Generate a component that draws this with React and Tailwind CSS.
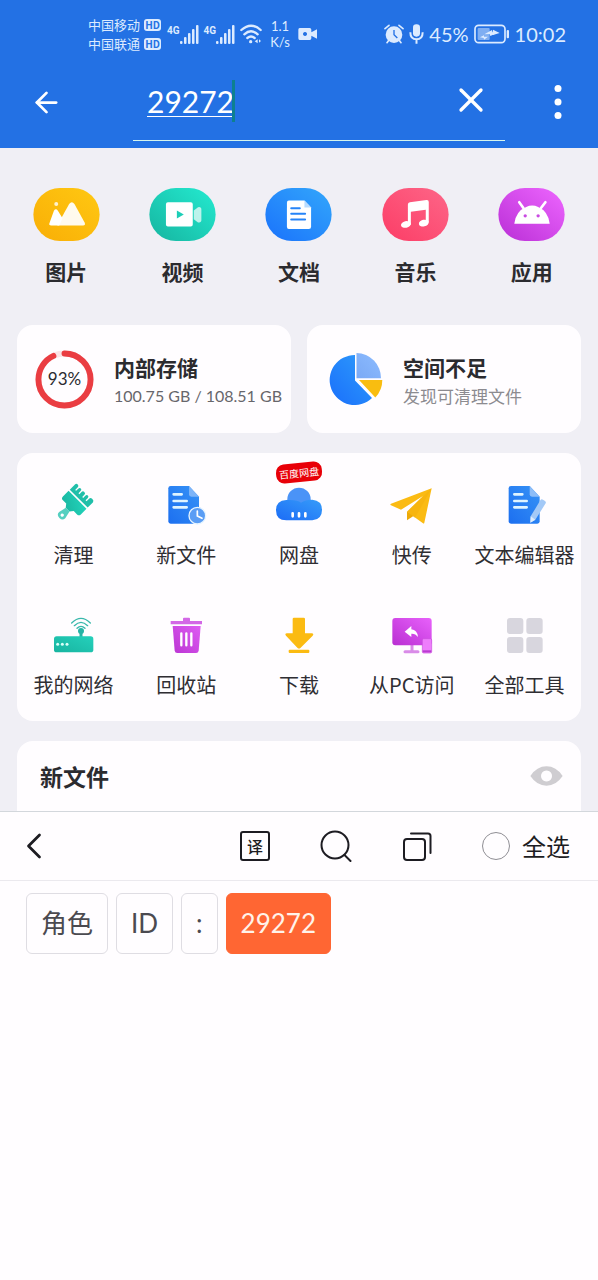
import { useState } from 'react';
import { ArrowLeft, ChevronLeft, X } from 'lucide-react';

/* ---------- shared bits ---------- */

function Gradient({ id, from, to }) {
  return (
    <linearGradient id={id} x1="0" y1="1" x2="1" y2="0">
      <stop offset="0" stopColor={from} />
      <stop offset="1" stopColor={to} />
    </linearGradient>
  );
}

function ToolSvg({ children }) {
  return (
    <svg viewBox="0 0 132 132" className="h-11 w-11 overflow-visible" aria-hidden="true">
      {children}
    </svg>
  );
}

/* ---------- status bar ---------- */

function HdBadge() {
  return (
    <span className="flex h-3 w-[17px] items-center justify-center rounded-[3px] bg-[#dcebff] text-[10px] leading-3 font-bold text-[#2371e4]">
      HD
    </span>
  );
}

function Signal() {
  return (
    <div className="flex">
      <span className="font-['Roboto',sans-serif] text-[10px] leading-3 font-bold">4G</span>
      <svg viewBox="0 0 20 19" className="h-[19px] w-5" fill="currentColor" aria-hidden="true">
        <rect x="0" y="16" width="2.500" height="3" rx="1" />
        <rect x="4" y="12" width="2.500" height="7" rx="1" />
        <rect x="8" y="8" width="2.500" height="11" rx="1" />
        <rect x="12" y="4" width="2.500" height="15" rx="1" />
        <rect x="16" y="0" width="2.500" height="19" rx="1" />
      </svg>
    </div>
  );
}

function StatusBar() {
  return (
    <div className="flex h-[68px] items-center justify-between pr-8 pl-[88px] text-[#dcebff]">
      <div className="flex items-center gap-1">
        <div className="mr-0.5 text-[13px] leading-[19px]">
          <div className="flex items-center gap-1">中国移动 <HdBadge /></div>
          <div className="flex items-center gap-1">中国联通 <HdBadge /></div>
        </div>
        <Signal />
        <Signal />
        <svg viewBox="0 0 66 60" className="h-5 w-[22px]" fill="none" stroke="currentColor" strokeWidth="7" strokeLinecap="round" aria-hidden="true">
          <path d="M4 18Q33-8 62 18M13 31Q33 13 53 31M22 42Q33 33 44 42" />
          <circle cx="32" cy="53" r="5" fill="currentColor" stroke="none" />
          <path d="M44 52l9-6v12zM57 46l6 5-6 5z" fill="currentColor" stroke="none" />
        </svg>
        <div className="ml-1 text-center font-['Lato',sans-serif] text-[13px] leading-4">
          1.1
          <br />
          K/s
        </div>
        <svg viewBox="0 0 60 42" className="ml-1 h-3.5 w-5" fill="currentColor" aria-hidden="true">
          <path fillRule="evenodd" d="M5 3h30q5 0 5 5v8l17-9v28l-17-9v8q0 5-5 5H5q-4 0-4-5V8q0-5 4-5zm16 12a6 6 0 1 0 .1 0z" />
        </svg>
      </div>

      <div className="flex items-center gap-[5px] font-['Lato',sans-serif] text-xl">
        <svg viewBox="0 0 60 60" className="h-5 w-5" aria-hidden="true">
          <g fill="none" stroke="currentColor" strokeWidth="5" strokeLinecap="round">
            <path d="M3 14L15 4M57 14L45 4M15 48l-6 8M45 48l6 8" />
          </g>
          <circle cx="30" cy="32" r="25" fill="currentColor" />
          <path d="M30 18v14l10 10" fill="none" stroke="#2371e4" strokeWidth="4" />
        </svg>
        <svg viewBox="0 0 45 60" className="h-5 w-[15px]" aria-hidden="true">
          <rect x="12" y="1" width="21" height="37" rx="10" fill="currentColor" />
          <path d="M4 25q0 21 18.500 21T41 25M22.500 45v14" fill="none" stroke="currentColor" strokeWidth="6" />
        </svg>
        <span>45%</span>
        <svg viewBox="0 0 108 60" className="h-5 w-9" aria-hidden="true">
          <rect x="3" y="4" width="90" height="52" rx="11" fill="none" stroke="currentColor" strokeWidth="5" />
          <rect x="11" y="12" width="36" height="36" rx="3" fill="currentColor" opacity=".5" />
          <path d="M31 31l23-13 2 7h18l-25 11-2-6zM18 40l12-6v4h12l-12 9-1-5z" fill="currentColor" />
          <path d="M57 17l20 10-20 6z" fill="currentColor" />
          <rect x="98" y="18" width="7" height="25" rx="3" fill="currentColor" />
        </svg>
        <span>10:02</span>
      </div>
    </div>
  );
}

/* ---------- header ---------- */

function Header() {
  const [query, setQuery] = useState('29272');

  return (
    <header className="bg-[#2371e4] text-white">
      <StatusBar />
      <div className="flex h-20 items-start">
        <button type="button" aria-label="返回" className="mt-[18px] ml-[30px]">
          <ArrowLeft size={33} strokeWidth={2} />
        </button>
        <div className="ml-[70px] flex h-[73px] flex-1 items-start border-b border-[#d5f5ee] pl-3.5">
          <input
            type="text"
            aria-label="搜索"
            value={query}
            onChange={(e) => setQuery(e.target.value)}
            className="mt-3 field-sizing-content h-[42px] bg-transparent font-['Lato',sans-serif] text-[30px] leading-[44px] underline decoration-1 underline-offset-3 outline-none"
          />
          <span className="-ml-0.5 mt-3 h-[42px] w-[3px] bg-[#0d8090]" />
          <button type="button" aria-label="清除" onClick={() => setQuery('')} className="mt-3 mr-3.5 ml-auto">
            <X size={40} strokeWidth={2} />
          </button>
        </div>
        <button type="button" aria-label="更多" className="mt-4 mr-8 ml-[45px]">
          <svg viewBox="0 0 16 36" className="h-9 w-4" fill="currentColor" aria-hidden="true">
            <circle cx="8" cy="4.500" r="3.500" />
            <circle cx="8" cy="18" r="3.500" />
            <circle cx="8" cy="31.500" r="3.500" />
          </svg>
        </button>
      </div>
    </header>
  );
}

/* ---------- categories ---------- */

const categories = [
  {
    label: '图片',
    from: '#f9ae06',
    to: '#ffc812',
    art: (
      <>
        <circle cx="69" cy="48" r="6" opacity=".8" />
        <path d="M62 69q6-9 12 0l14 22-10 22H54q-9 0-5-8z" />
        <path opacity=".93" d="M108 48q8-10 16 0l31 57q3 8-5 8H72z" />
      </>
    ),
  },
  {
    label: '视频',
    from: '#16b5a0',
    to: '#24ead0',
    art: (
      <>
        <path fillRule="evenodd" d="M56 43h69q6 0 6 6v61q0 6-6 6H56q-6 0-6-6V49q0-6 6-6zm27 25v24l21-12z" />
        <path opacity=".7" d="M134 68l13-10q10-2 10 8v30q0 10-10 8l-13-10z" />
      </>
    ),
  },
  {
    label: '文档',
    from: '#1a72fb',
    to: '#33a7fb',
    art: (
      <>
        <path d="M71 38h47l20 21v58q0 7-7 7H71q-6 0-6-7V45q0-7 6-7z" />
        <path d="M118 38v21h20z" fill="#b9dcff" />
        <path d="M78 61h26M78 78h42M78 95h42" stroke="#2684f8" strokeWidth="6" strokeLinecap="round" />
      </>
    ),
  },
  {
    label: '音乐',
    from: '#fc3d66',
    to: '#fd6688',
    art: (
      <>
        <path d="M77 50q0-6 6-7l50-7q7-1 7 6v62h-9V66l-45 6v39h-9z" />
        <ellipse cx="71" cy="110" rx="15" ry="10" transform="rotate(-12 71 110)" />
        <ellipse cx="125" cy="106" rx="15" ry="10" transform="rotate(-12 125 106)" />
      </>
    ),
  },
  {
    label: '应用',
    from: '#b92fd6',
    to: '#ee66ff',
    art: (
      <>
        <path d="M48 108q4-38 36-51 18-8 36 0 31 13 35 51z" />
        <path d="M63 43l13 18M142 43l-14 18" stroke="#fff" strokeWidth="8" strokeLinecap="round" />
        <circle cx="81" cy="84" r="5" fill="#c94be2" />
        <circle cx="120" cy="84" r="5" fill="#c94be2" />
      </>
    ),
  },
];

function Categories() {
  return (
    <nav className="grid grid-cols-5 px-2 pt-10 pb-[38px]">
      {categories.map((c, i) => (
        <button key={c.label} type="button" className="flex flex-col items-center gap-3.5">
          <svg viewBox="0 0 200 160" className="h-[53px] w-[67px]" fill="#fff" aria-hidden="true">
            <defs>
              <Gradient id={`cat${i}`} from={c.from} to={c.to} />
            </defs>
            <rect width="200" height="160" rx="80" fill={`url(#cat${i})`} />
            {c.art}
          </svg>
          <span className="text-[21px] leading-8 font-bold text-[#2b2b2f]">{c.label}</span>
        </button>
      ))}
    </nav>
  );
}

/* ---------- storage cards ---------- */

function StorageCards() {
  return (
    <section className="grid grid-cols-2 gap-4">
      <button type="button" className="flex h-[108px] items-center gap-5 rounded-2xl bg-[#fffdff] pl-[18px] text-left">
        <div className="grid h-[59px] w-[59px] shrink-0 place-items-center">
          <svg viewBox="0 0 60 60" className="col-start-1 row-start-1 h-full w-full -rotate-90" fill="none" aria-hidden="true">
            <circle cx="30" cy="30" r="26.500" stroke="#fbe3e6" strokeWidth="6" />
            <circle cx="30" cy="30" r="26.500" stroke="#ea3d42" strokeWidth="6" strokeLinecap="round" pathLength="100" strokeDasharray="93 7" />
          </svg>
          <span className="col-start-1 row-start-1 font-['Lato',sans-serif] text-[17px] text-[#2b2b2f]">93%</span>
        </div>
        <div className="pt-1 whitespace-nowrap">
          <div className="text-[21px] leading-[30px] font-bold text-[#2b2b2f]">内部存储</div>
          <div className="font-['Lato',sans-serif] text-base leading-7 text-[#67666b]">100.75 GB / 108.51 GB</div>
        </div>
      </button>

      <button type="button" className="flex h-[108px] items-center gap-5 rounded-2xl bg-[#fffdff] pl-[22px] text-left">
        <svg viewBox="0 0 54 54" className="h-[54px] w-[54px] shrink-0" aria-hidden="true">
          <defs>
            <Gradient id="pieMain" from="#1a6ffb" to="#2e9cfb" />
            <Gradient id="pieLight" from="#7aa9f5" to="#8dbcff" />
          </defs>
          <path d="M26 3v25.500L43 46A25 25 0 1 1 26 3z" fill="url(#pieMain)" />
          <path d="M27.500 1A25 25 0 0 1 52 26.300H27.500z" fill="url(#pieLight)" />
          <path d="M30 28h23.300a25 25 0 0 1-7 17.500z" fill="#f9bd10" />
        </svg>
        <div className="pt-1 whitespace-nowrap">
          <div className="text-[21px] leading-[30px] font-bold text-[#2b2b2f]">空间不足</div>
          <div className="text-[17px] leading-7 text-[#8c8b90]">发现可清理文件</div>
        </div>
      </button>
    </section>
  );
}

/* ---------- tools ---------- */

const tools = [
  {
    label: '清理',
    icon: (
      <ToolSvg>
        <defs>
          <Gradient id="brush" from="#19b39e" to="#22d3ba" />
        </defs>
        <g transform="translate(81 49) rotate(45)">
          <path d="M-38-3v-22q0-6 6-6t6 6v11h4v-9q0-6 5-6t5 6v9h4v-9q0-6 6-6t6 6v9h4v-9q0-6 5-6t5 6v9h4v-11q0-6 8-6t8 6v22z" fill="#20bfa9" />
          <path d="M-38 2h76v24q0 8-8 8H16l-8 10H-8l-8-10h-14q-8 0-8-8z" fill="url(#brush)" />
          <path fillRule="evenodd" d="M-8 44H8l5 23q0 12-13 12t-13-12zM0 62a5 5 0 1 0 .1 0z" fill="#55cfc0" />
        </g>
      </ToolSvg>
    ),
  },
  {
    label: '新文件',
    icon: (
      <ToolSvg>
        <defs>
          <Gradient id="docNew" from="#1c6ff0" to="#3793f6" />
        </defs>
        <path d="M20 9h55l30 32v74q0 7-7 7H20q-7 0-7-7V16q0-7 7-7z" fill="url(#docNew)" />
        <path d="M75 9v25q0 7 7 7h23z" fill="#7db4f8" />
        <path d="M29 34h24M29 54h39M29 73h39" stroke="#dff4ff" strokeWidth="8" strokeLinecap="round" />
        <circle cx="100" cy="98" r="25" fill="#5a9df5" stroke="#e6f4ff" strokeWidth="4" />
        <path d="M100 84v15l14 7" fill="none" stroke="#fff" strokeWidth="5" strokeLinecap="round" />
      </ToolSvg>
    ),
  },
  {
    label: '网盘',
    badge: '百度网盘',
    icon: (
      <ToolSvg>
        <defs>
          <Gradient id="cloud" from="#1c6cf6" to="#369cf9" />
        </defs>
        <circle cx="66" cy="49" r="35" fill="#4a93f7" />
        <path d="M28 51h10q25 0 34 8 12-9 34-9 29 2 29 31t-29 31H28q-31 0-31-30t31-31z" fill="url(#cloud)" />
        <path d="M47 91v9M66 91v9M85 91v9" stroke="#fff" strokeWidth="8" strokeLinecap="round" />
      </ToolSvg>
    ),
  },
  {
    label: '快传',
    icon: (
      <ToolSvg>
        <path d="M51 86v26l24-16z" fill="#eda908" />
        <path d="M125 16L3 62q-4 3 0 5l30 13 66-41-48 47 48 35q3 2 4-2z" fill="#fbbb13" />
        <path d="M125 16L51 86l24 18z" fill="#f3b00c" opacity=".5" />
      </ToolSvg>
    ),
  },
  {
    label: '文本编辑器',
    icon: (
      <ToolSvg>
        <defs>
          <Gradient id="docEdit" from="#1c6ff0" to="#3793f6" />
        </defs>
        <path d="M24 9h56l30 32v74q0 7-7 7H24q-7 0-7-7V16q0-7 7-7z" fill="url(#docEdit)" />
        <path d="M80 9v25q0 7 7 7h23z" fill="#8dbdf8" />
        <path d="M34 34h24M34 54h37M34 73h37" stroke="#dff4ff" strokeWidth="8" strokeLinecap="round" />
        <path d="M112 52q3-5 8-2l6 4q4 3 2 7l-31 49-15 9 1-19z" fill="#a3c9f7" />
        <path d="M83 100l14 10-15 9z" fill="#dcebfc" />
      </ToolSvg>
    ),
  },
  {
    label: '我的网络',
    icon: (
      <ToolSvg>
        <defs>
          <Gradient id="router" from="#18b4a0" to="#25d0bb" />
        </defs>
        <path d="M62 30q28-28 56 0M70 38q20-20 40 0M78 46q12-12 24 0" fill="none" stroke="#38b8ab" strokeWidth="4" strokeLinecap="round" />
        <circle cx="90" cy="54" r="9" fill="#27b3a5" />
        <path d="M90 54v18" stroke="#27b3a5" strokeWidth="9" />
        <rect x="9" y="70" width="118" height="48" rx="8" fill="url(#router)" />
        <g fill="#d9fff8">
          <circle cx="20" cy="94" r="4.500" />
          <circle cx="34" cy="94" r="4.500" />
          <circle cx="48" cy="94" r="4.500" />
        </g>
      </ToolSvg>
    ),
  },
  {
    label: '回收站',
    icon: (
      <ToolSvg>
        <defs>
          <Gradient id="trash" from="#bb35d3" to="#de5df3" />
        </defs>
        <path d="M20 34V24h37v-7q0-3 3-3h15q3 0 3 3v7h36v10z" fill="#d368e6" />
        <path d="M26 39h84l-6 74q-1 7-8 7H40q-7 0-8-7z" fill="url(#trash)" />
        <path d="M52 61v36M67 61v36M82 61v36" stroke="#fff" strokeWidth="7" strokeLinecap="round" />
      </ToolSvg>
    ),
  },
  {
    label: '下载',
    icon: (
      <ToolSvg>
        <g fill="#fbbb12">
          <path d="M51 14h29q4 0 4 4v43h20q8 1 3 7l-36 36q-5 5-10 0L27 68q-5-6 3-7h17V18q0-4 4-4z" />
          <rect x="35" y="110" width="62" height="10" rx="3" />
        </g>
      </ToolSvg>
    ),
  },
  {
    label: '从PC访问',
    icon: (
      <ToolSvg>
        <defs>
          <Gradient id="pc" from="#b92fd2" to="#e861fb" />
        </defs>
        <path d="M66 97v16M45 116h39" stroke="#d98be8" strokeWidth="9" strokeLinecap="round" />
        <rect x="7" y="15" width="118" height="82" rx="9" fill="url(#pc)" />
        <path d="M44 56l20-17v10q18 2 20 23-8-11-20-10v10z" fill="#fff" />
        <rect x="97" y="77" width="28" height="43" rx="4" fill="#ee7dfc" stroke="#c850dd" strokeWidth="2" />
        <path d="M98 115h26" stroke="#b93cd0" strokeWidth="6" />
      </ToolSvg>
    ),
  },
  {
    label: '全部工具',
    icon: (
      <ToolSvg>
        <g fill="#d8d6de">
          <rect x="12" y="15" width="49" height="48" rx="9" />
          <rect x="70" y="15" width="49" height="48" rx="9" />
          <rect x="12" y="72" width="49" height="48" rx="9" />
          <rect x="70" y="72" width="49" height="48" rx="9" />
        </g>
      </ToolSvg>
    ),
  },
];

function Tools() {
  return (
    <section className="mt-5 grid grid-cols-5 gap-y-[42px] rounded-2xl bg-[#fffdff] pt-[30px] pb-5">
      {tools.map((t) => (
        <button key={t.label} type="button" className="relative flex flex-col items-center gap-3">
          {t.icon}
          <span className="text-xl leading-8 whitespace-nowrap text-[#2f2e33]">{t.label}</span>
          {t.badge && (
            <span className="absolute -top-5 -rotate-6 rounded-lg bg-[#e80008] px-[3px] text-[10px] leading-[19px] whitespace-nowrap text-white">
              {t.badge}
            </span>
          )}
        </button>
      ))}
    </section>
  );
}

/* ---------- text picker panel ---------- */

const words = ['角色', 'ID', ':', '29272'];

function WordPanel() {
  const [picked, setPicked] = useState(['29272']);
  const allPicked = picked.length === words.length;

  const toggle = (word) => {
    setPicked(picked.includes(word) ? picked.filter((w) => w !== word) : [...picked, word]);
  };

  return (
    <section className="flex-1 border-t border-[#d3d7dc] bg-[#fffdff] text-[#1d1c22]">
      <div className="flex h-[69px] items-center border-b border-[#ebe9ee] pr-7 pl-3">
        <button type="button" aria-label="返回" className="mr-auto">
          <ChevronLeft size={44} strokeWidth={1.5} />
        </button>
        <div className="flex items-center gap-[50px]">
          <button type="button" aria-label="翻译" className="h-[30px] w-[30px] rounded-[3px] border-2 border-[#1d1c22] text-base leading-[26px] font-medium">
            译
          </button>
          <button type="button" aria-label="搜索">
            <svg viewBox="0 0 32 32" className="h-8 w-8" fill="none" stroke="currentColor" strokeWidth="2" strokeLinecap="round" aria-hidden="true">
              <circle cx="15" cy="15" r="13.500" />
              <path d="M24.500 25l6 6" />
            </svg>
          </button>
          <button type="button" aria-label="复制">
            <svg viewBox="0 0 30 30" className="h-[30px] w-[30px]" fill="none" stroke="currentColor" strokeWidth="2" strokeLinecap="round" aria-hidden="true">
              <rect x="2" y="8" width="21" height="21" rx="3" />
              <path d="M9 2.500h17q2.500 0 2.500 2.500v17" />
            </svg>
          </button>
          <label className="flex items-center gap-3 text-2xl">
            <input
              type="checkbox"
              checked={allPicked}
              onChange={() => setPicked(allPicked ? [] : words)}
              className="h-7 w-7 appearance-none rounded-full border border-[#8f8e94] checked:border-[#ff6633] checked:bg-[#ff6633]"
            />
            全选
          </label>
        </div>
      </div>

      <div className="flex flex-wrap gap-2 px-[26px] pt-3">
        {words.map((word) => (
          <button
            key={word}
            type="button"
            aria-pressed={picked.includes(word)}
            onClick={() => toggle(word)}
            className={
              picked.includes(word)
                ? "h-[61px] rounded-md border border-[#ff6633] bg-[#ff6633] px-3.5 font-['Lato','Noto_Sans_CJK_SC',sans-serif] text-[26px] text-[#fff3ea]"
                : "h-[61px] rounded-md border border-[#dfdde3] px-3.5 font-['Lato','Noto_Sans_CJK_SC',sans-serif] text-[26px] text-[#4b4a50]"
            }
          >
            {word}
          </button>
        ))}
      </div>
    </section>
  );
}

function App() {
  return (
    <div className="flex min-h-screen flex-col bg-[#f0eff5] font-['Noto_Sans_CJK_SC',sans-serif]">
      <Header />
      <Categories />
      <main className="px-[17px]">
        <StorageCards />
        <Tools />
        <section className="mt-5 flex h-[70px] items-center justify-between rounded-t-2xl bg-[#fffdff] pr-[18px] pl-[23px]">
          <h2 className="text-[23px] font-bold text-[#2b2b2f]">新文件</h2>
          <button type="button" aria-label="显示">
            <svg viewBox="0 0 100 62" className="h-5 w-[33px]" fill="#cfcdd1" aria-hidden="true">
              <path fillRule="evenodd" d="M0 31Q20 1 50 1t50 30Q80 61 50 61T0 31zm50-17a17 17 0 1 0 .1 0z" />
            </svg>
          </button>
        </section>
      </main>
      <WordPanel />
    </div>
  );
}

export default App;
